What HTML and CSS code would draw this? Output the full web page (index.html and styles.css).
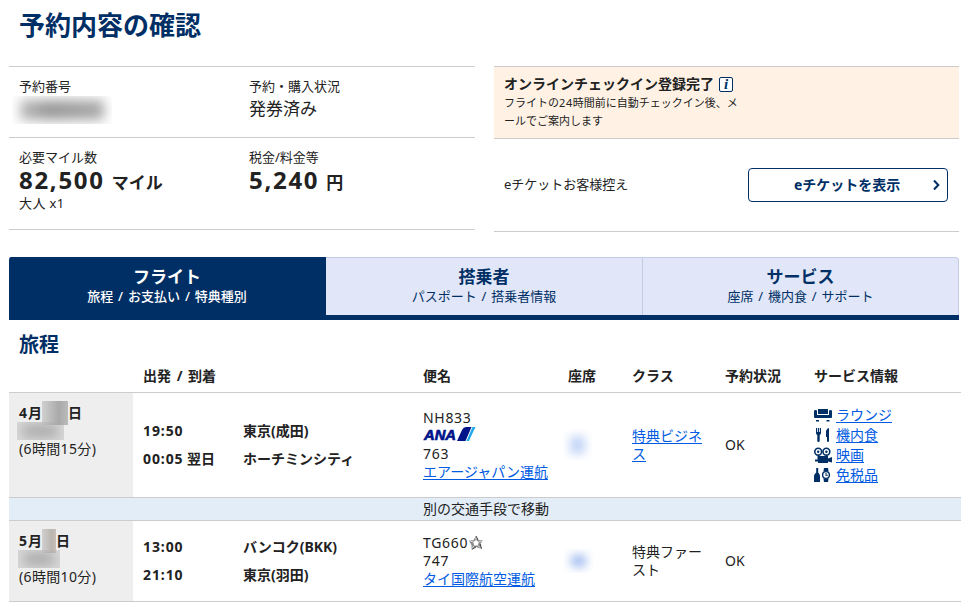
FILE: index.html
```html
<!DOCTYPE html>
<html lang="ja">
<head>
<meta charset="utf-8">
<title>予約内容の確認</title>
<link rel="stylesheet" href="styles.css">
</head>
<body>
<main class="page">
  <h1 class="title">予約内容の確認</h1>
  <section class="overview">
    <div class="summary">
      <div class="summary-row summary-first">
        <div>
          <div class="label">予約番号</div>
          <div class="mask mask-ref"><i></i></div>
        </div>
        <div>
          <div class="label">予約・購入状況</div>
          <div class="value">発券済み</div>
        </div>
      </div>
      <div class="summary-row summary-second">
        <div>
          <div class="label">必要マイル数</div>
          <div class="amount"><span class="num">82,500</span><span class="unit">マイル</span></div>
          <div class="label pax">大人 x1</div>
        </div>
        <div>
          <div class="label">税金/料金等</div>
          <div class="amount"><span class="num">5,240</span><span class="unit">円</span></div>
        </div>
      </div>
    </div>
    <div class="side">
      <div class="notice">
        <div class="notice-title">オンラインチェックイン登録完了<span class="info">i</span></div>
        <p class="notice-text">フライトの<span class="n24">24</span>時間前に自動チェックイン後、メ<br>ールでご案内します</p>
      </div>
      <div class="eticket">
        <span class="eticket-label">eチケットお客様控え</span>
        <a class="button">eチケットを表示<svg class="chev" width="8" height="12" viewBox="0 0 8 12"><path d="M2 1.500 6.300 6 2 10.500" fill="none" stroke="#002f65" stroke-width="2"/></svg></a>
      </div>
    </div>
  </section>
  <nav class="tabs">
    <a class="tab active"><b>フライト</b><span>旅程 / お支払い / 特典種別</span></a>
    <a class="tab"><b>搭乗者</b><span>パスポート / 搭乗者情報</span></a>
    <a class="tab"><b>サービス</b><span>座席 / 機内食 / サポート</span></a>
  </nav>
  <h2 class="section-title">旅程</h2>
  <section class="table">
    <div class="row head">
      <div></div><div class="time">出発 / 到着</div><div></div><div>便名</div><div>座席</div><div>クラス</div><div>予約状況</div><div>サービス情報</div>
    </div>
    <div class="row leg leg-one">
      <div class="date">
        <div class="day"><span class="clock">4</span>月<span class="mask mask-day"><i></i></span>日</div>
        <div class="mask mask-week"><i></i></div>
        <div class="duration">(6時間15分)</div>
      </div>
      <div class="time stack"><span class="clock">19:50</span><span><span class="clock">00:05</span> 翌日</span></div>
      <div class="place stack"><span>東京(成田)</span><span>ホーチミンシティ</span></div>
      <div class="flight">
        <div class="lat">NH833</div>
        <div class="logo">
          <svg width="53" height="15" viewBox="0 0 53 15"><text x="1" y="13" textLength="32" lengthAdjust="spacingAndGlyphs" class="logo-text">ANA</text><path d="M34 14 39 3Q40.500 0 43 0H48.500L42.500 14Z" fill="#00148a"/><path d="M43.500 14 49.500 0H52.500Q50 5 46 14Z" fill="#22a9ec"/></svg>
        </div>
        <div class="lat">763</div>
        <div><a class="link">エアージャパン運航</a></div>
      </div>
      <div><div class="mask mask-seat"><i></i></div></div>
      <div class="cabin"><a class="link">特典ビジネ<br>ス</a></div>
      <div>OK</div>
      <div class="services">
        <div><svg width="18" height="16" viewBox="0 0 18 16"><path d="M4 2h10v5H4zM0 4q0-1 1.500-1T3 4v4h12V4q0-1 1.500-1T18 4v6q0 1-1 1H1q-1 0-1-1zM2 13h3v1.500H2zM12.500 13h3v1.500h-3z"/></svg><a class="link">ラウンジ</a></div>
        <div><svg width="18" height="16" viewBox="0 0 18 16"><path d="M2 1h1v4h.8V1h1.400v4H6V1h1v5q0 1.500-1.300 2v6q0 1-1.200 1t-1.200-1V8Q2 7.500 2 6zM12 4q1-3 3-3v13q0 1-1 1t-1-1v-4h-1z"/></svg><a class="link">機内食</a></div>
        <div><svg width="18" height="16" viewBox="0 0 18 16"><circle cx="4.200" cy="4.700" r="3.400" fill="#fff" stroke="#002f65" stroke-width="1.600"/><circle cx="12.400" cy="4.700" r="3.400" fill="#fff" stroke="#002f65" stroke-width="1.600"/><circle cx="4.200" cy="4.700" r="1.200"/><circle cx="12.400" cy="4.700" r="1.200"/><path d="M3.500 9H14v2.500L18 10v5.500L14 14.500V16H4v-1.500H1v-2h2.500z"/></svg><a class="link">映画</a></div>
        <div><svg width="18" height="16" viewBox="0 0 18 16"><path d="M2.200 1h2v4.500Q6 7 6 9v6H0V9q0-2 2.200-3.500zM10 1h4l.6 3.500h-5.200zM9.400 11.500h5.200L14 15h-4z"/><circle cx="12" cy="8" r="3.400" fill="#fff" stroke="#002f65" stroke-width="1.400"/><path d="M11.500 6h1v1.700h1.300v1h-2.300z"/></svg><a class="link">免税品</a></div>
      </div>
    </div>
    <div class="transfer">別の交通手段で移動</div>
    <div class="row leg leg-two">
      <div class="date">
        <div class="day"><span class="clock">5</span>月<span class="mask mask-day short"><i></i></span>日</div>
        <div class="mask mask-week week-two"><i></i></div>
        <div class="duration">(6時間10分)</div>
      </div>
      <div class="time stack"><span class="clock">13:00</span><span class="clock">21:10</span></div>
      <div class="place stack"><span>バンコク(BKK)</span><span>東京(羽田)</span></div>
      <div class="flight">
        <div class="lat partner">TG660<svg width="16" height="16" viewBox="0 0 16 16"><path d="M8 .8 10.200 5.200 15 5 12.300 9 13.500 14 8 12 3.500 14.500 3.500 10 .8 5.500 5.500 5.300Z" fill="#888"/><path d="M8 5 10.800 7 9.800 10.400H6.200L5.200 7Z" fill="#fff"/><path d="M8 1V5M14.500 5.500 10.800 7M13 13.500 9.800 10.400M3.500 14 6.200 10.400M1 5.500 5.200 7" stroke="#ddd" stroke-width="1"/><path d="M8 1 10.200 5.200M12.300 9 13.500 13.700M8 12 4 14.300" stroke="#444" stroke-width="1"/></svg></div>
        <div class="lat">747</div>
        <div><a class="link">タイ国際航空運航</a></div>
      </div>
      <div><div class="mask mask-seat seat-two"><i></i></div></div>
      <div class="cabin">特典ファー<br>スト</div>
      <div>OK</div>
      <div></div>
    </div>
  </section>
</main>
</body>
</html>
```
FILE: styles.css
```css
* { box-sizing: border-box; }
body {
  margin: 0;
  background: #fff;
  color: #222;
  font: 14px/18px "Noto Sans", "Noto Sans CJK JP", sans-serif;
}
.page { padding-left: 9px; width: 972px; }
.title, .section-title { margin: 0; padding-left: 10px; color: #002f65; font-weight: 700; }
.title { font-size: 26px; line-height: 50px; height: 66px; }

.overview { display: grid; grid-template-columns: 466px 465px; column-gap: 19px; height: 191px; align-items: start; }
.summary, .side { border-top: 1px solid #ccc; }
.summary-row { display: grid; grid-template-columns: 230px 1fr; padding-left: 10px; border-bottom: 1px solid #ccc; }
.summary-first { height: 71px; padding-top: 10px; }
.summary-second { height: 92px; padding-top: 10px; }
.label { font-size: 13px; line-height: 18px; }
.value { font-size: 17px; line-height: 27px; }
.amount { display: flex; align-items: baseline; gap: 7px; height: 28px; line-height: 28px; font-weight: 700; }
.num { font-size: 24px; letter-spacing: 1.700px; }
.unit { font-size: 17px; }
.pax { letter-spacing: .4px; }

.notice { height: 72px; padding: 8px 10px; background: #fff2e5; border-bottom: 1px solid #ccc; }
.notice-title { display: flex; align-items: center; gap: 5px; line-height: 18px; font-weight: 700; }
.info { width: 14px; height: 15px; border: 1px solid #002f65; border-radius: 2px; background: #fff; color: #002f65; font: italic 700 15px/12px "Liberation Serif", serif; text-align: center; }
.notice-text { margin: 0; padding-top: 1px; font-size: 11px; line-height: 18px; }
.n24 { letter-spacing: .6px; }
.eticket { display: flex; align-items: center; justify-content: space-between; height: 93px; padding: 0 11px 0 10px; border-bottom: 1px solid #ccc; }
.eticket-label { font-size: 13px; padding-bottom: 2px; }
.button { display: flex; align-items: center; width: 200px; height: 34px; padding: 0 7px 0 45px; border: 1px solid #002f65; border-radius: 4px; color: #002f65; font-weight: 700; white-space: nowrap; }
.chev { margin-left: auto; }

.tabs { display: grid; grid-template-columns: 317px 317px 316px; width: 950px; height: 63px; border-bottom: 5px solid #002f65; border-radius: 3px 3px 0 0; overflow: hidden; }
.tab { display: flex; flex-direction: column; align-items: center; padding-top: 9px; border-top: 1px solid #c3cce5; border-right: 1px solid #c3cce5; background: #e1e7f8; color: #002f65; }
.tab:last-child { border-top-right-radius: 3px; }
.tab b { font-size: 17px; line-height: 20px; }
.tab span { font-size: 13px; line-height: 18px; word-spacing: 1.500px; }
.tab.active { border-color: #002f65; background: #002f65; color: #fff; }
.tab.active span { font-weight: 500; }

.section-title { font-size: 20px; line-height: 50px; height: 47px; }
.table { width: 952px; }
.row { display: grid; grid-template-columns: 124px 110px 180px 145px 64px 93px 89px 1fr; align-items: center; }
.head { height: 25px; font-weight: 700; padding-bottom: 7px; }
.time { padding-left: 10px; white-space: nowrap; }
.head .time { word-spacing: 2px; }
.leg { border-top: 1px solid #ccc; }
.leg-one { height: 105px; }
.leg-two { height: 82px; border-bottom: 1px solid #ccc; }
.date { align-self: stretch; padding: 11px 0 0 10px; background: #eee; }
.day { display: flex; height: 18px; font-weight: 700; }
.duration { letter-spacing: .35px; white-space: nowrap; }
.stack { display: flex; flex-direction: column; gap: 10px; font-weight: 700; }
.clock { letter-spacing: .9px; }
.lat { letter-spacing: .7px; }
.logo { height: 18px; }
.logo svg { display: block; overflow: visible; }
.logo-text { font: italic 700 15px "Liberation Sans", sans-serif; fill: #00148a; stroke: #00148a; stroke-width: .7px; letter-spacing: 0; }
.partner { display: flex; align-items: center; }
.link { color: #005be2; text-decoration: underline; text-underline-offset: 2px; }
.cabin { padding-bottom: 1px; }
.services { display: flex; flex-direction: column; padding-bottom: 1px; }
.services div { display: flex; align-items: center; gap: 4px; height: 20px; }
.services svg { fill: #002f65; }
.transfer { height: 23px; border-top: 1px solid #ccc; padding-left: 414px; background: #e3edf8; line-height: 21px; }

.mask { display: block; overflow: hidden; flex: none; }
.mask i { display: block; height: 100%; }
.mask-ref { width: 100px; height: 28px; margin: 1px 0 0 -7px; padding: 4px 8px; }
.mask-ref i { background: linear-gradient(90deg, #bbb, #999 35%, #a3a3a3 70%, #aaa); filter: blur(6px); }
.mask-day { width: 26px; height: 24px; margin: -3px 0 0 0; background: linear-gradient(90deg, #d0d0d0, #a9a9a9 65%, #bbb); }
.mask-day.short { width: 14px; background: linear-gradient(90deg, #d0d0d0, #bbb5b0 70%, #c8c0ba); }
.mask-week { width: 47px; height: 18px; margin-left: -2px; padding: 3px 6px; background: #d8d8d8; }
.mask-week i { background: #a8a8a8; filter: blur(6px); }
.week-two { width: 42px; margin-left: -1px; }
.mask-seat { width: 29px; height: 32px; margin-left: -5px; padding: 7px; }
.mask-seat i { background: #c3d5f7; filter: blur(5px); }
.seat-two { width: 31px; height: 24px; padding: 6px 8px; }
.seat-two i { background: #a3bdf0; }
```
